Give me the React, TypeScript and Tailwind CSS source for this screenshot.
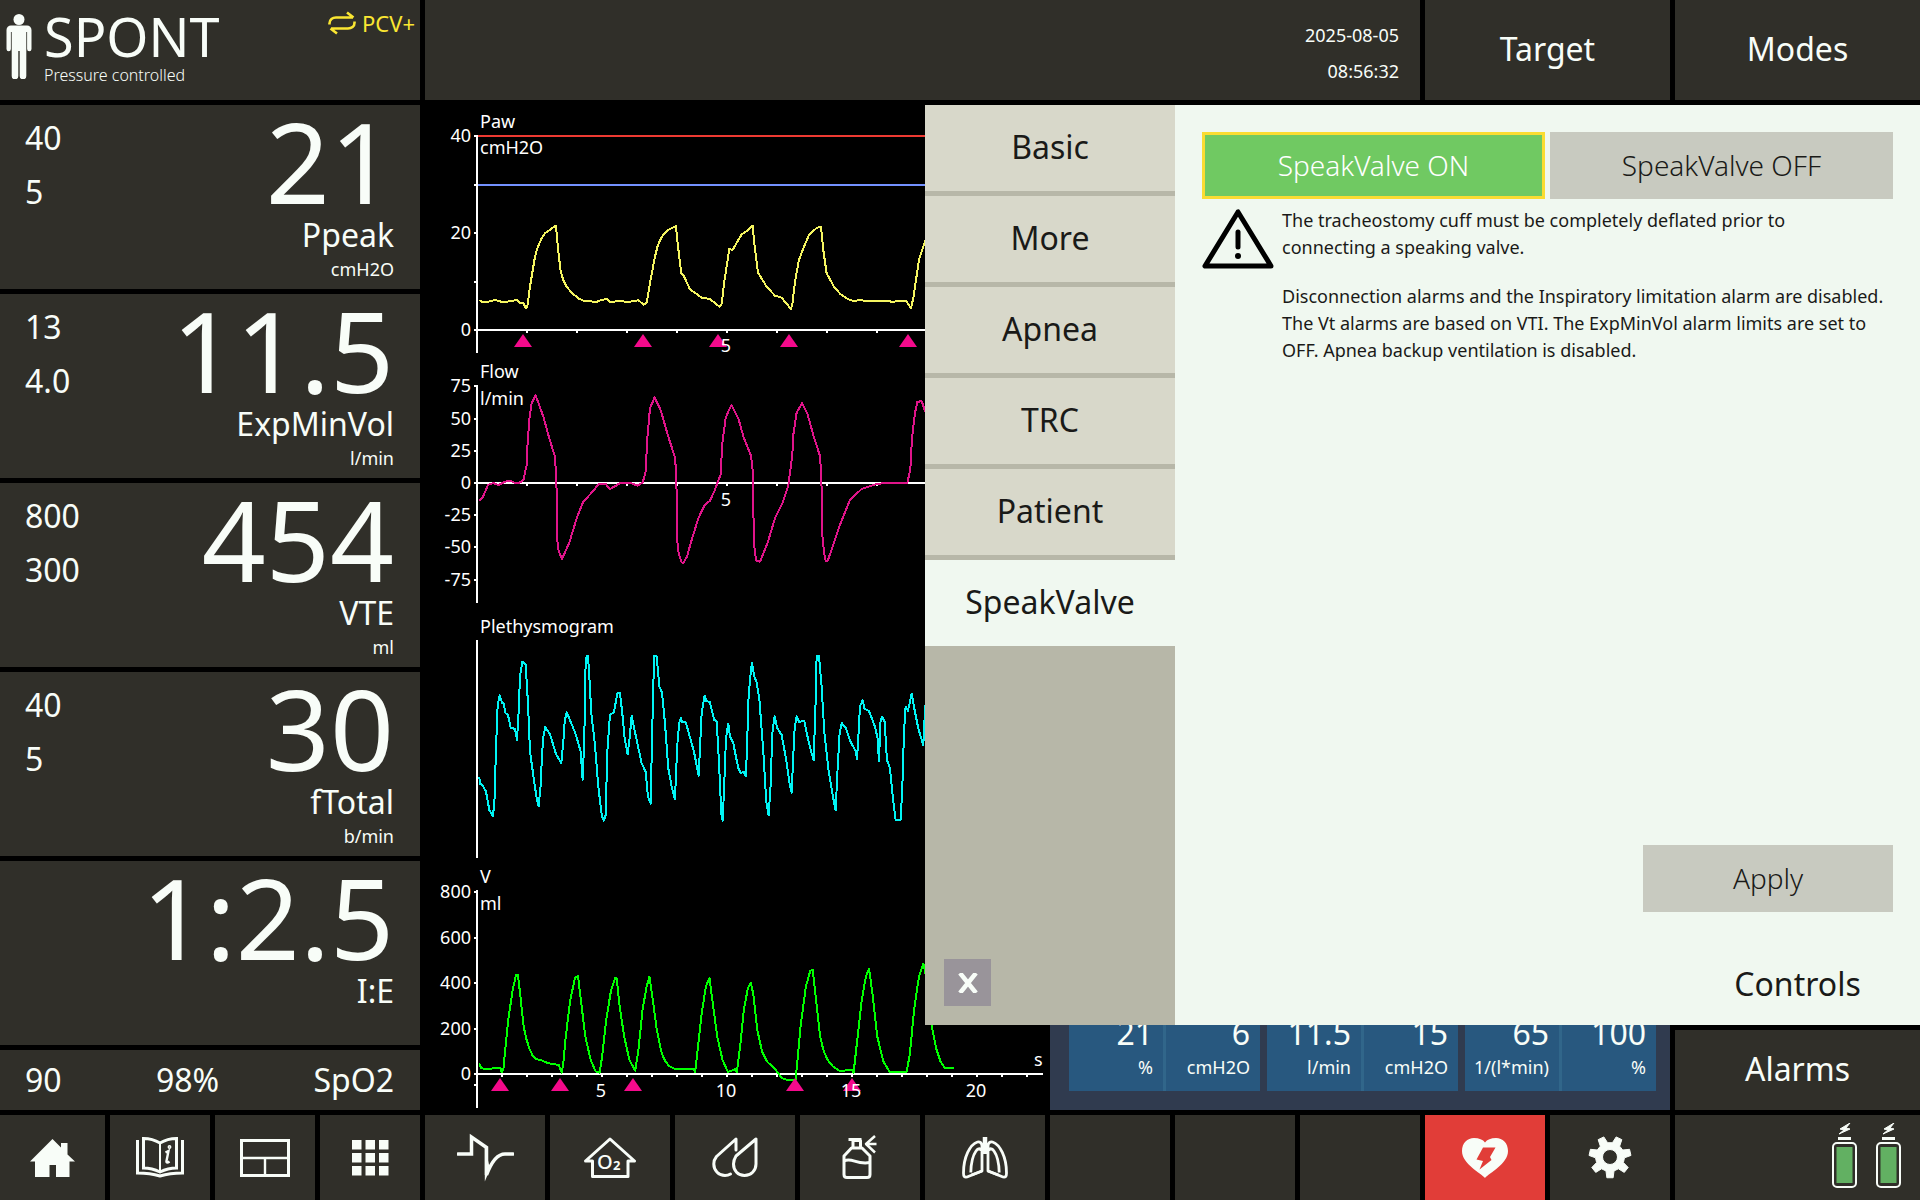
import React from "react";

const vitals = [
  { high: "40", low: "5", value: "21", label: "Ppeak", unit: "cmH2O" },
  { high: "13", low: "4.0", value: "11.5", label: "ExpMinVol", unit: "l/min" },
  { high: "800", low: "300", value: "454", label: "VTE", unit: "ml" },
  { high: "40", low: "5", value: "30", label: "fTotal", unit: "b/min" },
  { high: "", low: "", value: "1:2.5", label: "I:E", unit: "" },
];

const tabs = ["Basic", "More", "Apnea", "TRC", "Patient", "SpeakValve"];

const settings = [
  [
    { value: "21", unit: "%" },
    { value: "6", unit: "cmH2O" },
  ],
  [
    { value: "11.5", unit: "l/min" },
    { value: "15", unit: "cmH2O" },
  ],
  [
    { value: "65", unit: "1/(l*min)" },
    { value: "100", unit: "%" },
  ],
];

const PAW =
  "178,600 185,605 205,605 225,600 250,607 290,600 300,608 310,608 317,624 322,620 330,560 345,470 352,445 365,415 375,400 385,393 395,385 408,377 413,435 422,515 430,540 440,560 455,578 475,595 490,602 530,606 545,599 562,598 570,606 600,603 625,606 655,601 672,614 680,608 690,550 705,470 713,438 723,415 733,400 745,390 768,378 773,430 784,520 790,525 810,568 845,593 870,597 898,620 905,612 913,545 928,447 938,450 965,403 985,390 998,377 1003,430 1014,518 1040,560 1065,587 1085,593 1113,627 1117,615 1125,545 1137,480 1150,445 1167,405 1190,384 1203,380 1210,450 1220,520 1242,560 1262,583 1285,598 1305,604 1315,600 1350,604 1380,603 1420,605 1458,602 1473,625 1480,595 1497,480 1515,425 1530,390";

const FLOW =
  "178,438 188,428 204,390 220,384 235,390 255,380 272,378 285,384 298,383 310,376 320,330 323,260 329,185 335,145 347,121 370,185 388,250 404,302 409,360 412,555 416,588 426,612 448,563 470,490 490,440 520,408 535,388 556,386 570,402 590,391 600,384 635,385 652,392 668,383 677,350 682,250 690,160 704,127 722,165 745,245 765,307 769,360 772,560 776,594 785,622 790,624 801,605 812,565 835,490 853,452 870,437 885,405 892,384 902,360 907,265 917,190 924,172 935,150 955,190 972,250 993,302 998,345 1000,470 1004,590 1010,618 1020,620 1043,563 1065,490 1088,443 1105,392 1111,346 1117,300 1120,240 1130,173 1146,145 1162,175 1180,240 1199,300 1204,350 1207,540 1212,590 1217,618 1223,618 1240,570 1260,510 1290,435 1325,402 1370,387 1400,384 1462,383 1471,345 1476,250 1485,175 1492,141 1505,138 1516,170 1530,200";

const PLETH =
  "178,515 180,536 188,541 198,560 208,615 218,634 223,600 228,430 233,300 239,271 246,293 251,296 257,325 264,330 272,368 285,372 291,405 296,320 300,215 307,170 317,180 324,295 330,440 342,525 350,580 356,604 362,540 366,450 370,395 376,366 390,388 408,447 424,474 430,410 434,350 440,321 452,350 468,390 482,440 488,525 493,400 496,200 500,153 504,153 508,215 514,325 525,420 535,545 546,635 552,647 557,630 562,440 570,330 582,322 592,265 600,265 607,325 614,400 623,448 629,400 635,332 650,405 665,475 677,500 684,575 692,596 696,410 700,240 703,153 710,153 718,245 726,262 735,355 745,490 756,550 765,583 769,485 773,405 778,352 783,340 787,351 797,351 808,390 822,440 836,512 840,430 845,325 854,272 859,289 869,290 883,345 890,348 897,470 904,625 908,647 912,560 918,400 925,356 930,395 940,415 955,490 962,503 972,502 977,514 981,440 985,290 990,225 996,173 1003,215 1010,232 1018,280 1030,440 1039,590 1046,631 1052,540 1057,385 1064,333 1072,370 1085,390 1098,460 1108,530 1115,563 1120,450 1124,370 1130,333 1137,350 1153,349 1167,415 1181,466 1187,290 1190,153 1197,153 1205,245 1213,380 1225,490 1240,580 1247,616 1253,490 1259,385 1265,354 1278,370 1290,407 1308,440 1311,463 1315,400 1320,305 1328,285 1334,312 1347,318 1365,365 1373,400 1377,468 1382,345 1387,335 1394,350 1401,465 1410,490 1420,590 1427,645 1442,645 1447,550 1452,385 1457,305 1464,318 1475,266 1483,310 1495,370 1510,420 1516,300";

const VOLUME =
  "145,610 150,625 163,627 182,625 197,623 200,637 204,630 207,590 216,480 227,390 235,346 240,345 246,410 254,500 260,535 268,566 275,585 283,597 298,601 312,609 340,615 347,638 351,610 357,530 368,420 380,352 387,348 396,440 405,530 418,600 430,634 440,638 446,590 456,480 468,390 478,354 482,356 488,430 500,530 513,600 527,632 535,570 545,450 555,380 562,350 568,400 580,510 592,580 600,602 610,618 625,627 671,628 674,636 680,570 690,460 700,380 709,354 716,420 728,530 741,600 754,636 772,628 776,636 784,560 793,450 803,385 810,368 816,400 826,510 838,575 850,605 868,625 886,654 900,660 920,660 923,620 932,500 945,380 956,332 962,330 970,420 980,530 988,570 997,597 1010,618 1027,632 1058,631 1062,638 1070,550 1082,420 1092,350 1100,326 1108,400 1120,530 1135,605 1150,635 1192,636 1200,580 1210,450 1222,350 1233,311 1238,340 1252,490 1264,565 1275,605 1285,623 1307,624";

type Label = { at: number; text: string };

type ChartProps = {
  height: number;
  title: string;
  unit?: string;
  titleY: number;
  unitY?: number;
  axis: [number, number];
  baseline?: number;
  labels?: Label[];
  ticks?: number[];
  step?: number;
  seconds?: Label[];
  secondsY?: number;
  markers?: number[];
  markerY?: number;
  samples: string;
  color: string;
  scaleX?: number;
  children?: React.ReactNode;
};

const Chart = ({
  height,
  title,
  unit,
  titleY,
  unitY = 0,
  axis,
  baseline,
  labels = [],
  ticks = [],
  step = 50,
  seconds = [],
  secondsY = 0,
  markers = [],
  markerY = 0,
  samples,
  color,
  scaleX = 0.3333,
  children,
}: ChartProps) => {
  const xTicks: number[] = [];
  for (let x = 52 + step; x < 618; x += step) xTicks.push(x);

  return (
    <svg viewBox={`0 0 620 ${height}`} className="block w-full" role="img" aria-label={title}>
      {children}
      <g stroke="#ffffff" strokeWidth="2" shapeRendering="crispEdges">
        <path d={`M52 ${axis[0]}V${axis[1]}`} />
        {baseline && <path d={`M49 ${baseline}H618`} />}
        {[...labels.map((l) => l.at), ...ticks].map((y) => (
          <path key={y} d={`M49 ${y}H52`} />
        ))}
        {baseline && xTicks.map((x) => <path key={x} d={`M${x} ${baseline}v3`} />)}
      </g>
      <polyline
        points={samples}
        transform={`translate(-5 -5) scale(${scaleX} 0.3333)`}
        vectorEffect="non-scaling-stroke"
        shapeRendering="crispEdges"
        fill="none"
        stroke={color}
        strokeWidth="2"
        strokeLinejoin="round"
      />
      {markers.map((x) => (
        <path key={x} d={`M${x} ${markerY}l9 13h-18z`} fill="#f50a8c" />
      ))}
      <g fill="#ffffff" fontSize="18">
        <text x="55" y={titleY}>{title}</text>
        {unit && <text x="55" y={unitY}>{unit}</text>}
        {labels.map((l) => (
          <text key={l.text} x="46" y={l.at + 6} textAnchor="end">{l.text}</text>
        ))}
        {seconds.map((l) => (
          <text key={l.text} x={l.at} y={secondsY} textAnchor="middle">{l.text}</text>
        ))}
      </g>
    </svg>
  );
};

const Waveforms = () => (
  <section className="flex flex-col bg-black">
    <Chart
      height={255}
      title="Paw"
      unit="cmH2O"
      titleY={23}
      unitY={49}
      axis={[30, 248]}
      baseline={225}
      labels={[{ at: 31, text: "40" }, { at: 128, text: "20" }, { at: 225, text: "0" }]}
      ticks={[80, 177]}
      seconds={[{ at: 301, text: "5" }]}
      secondsY={247}
      markers={[98, 218, 293, 364, 483]}
      markerY={229}
      samples={PAW}
      color="#f5f560"
    >
      <path d="M52 31H620" stroke="#ee3a32" strokeWidth="2" />
      <path d="M52 80H620" stroke="#7391ff" strokeWidth="2" />
    </Chart>
    <Chart
      height={250}
      title="Flow"
      unit="l/min"
      titleY={18}
      unitY={45}
      axis={[25, 243]}
      baseline={123}
      labels={[
        { at: 26, text: "75" },
        { at: 59, text: "50" },
        { at: 91, text: "25" },
        { at: 123, text: "0" },
        { at: 155, text: "-25" },
        { at: 187, text: "-50" },
        { at: 220, text: "-75" },
      ]}
      seconds={[{ at: 301, text: "5" }]}
      secondsY={146}
      samples={FLOW}
      color="#e0148a"
    />
    <Chart height={255} title="Plethysmogram" titleY={23} axis={[30, 248]} samples={PLETH} color="#00f5f5" />
    <Chart
      height={245}
      title="V"
      unit="ml"
      titleY={18}
      unitY={45}
      axis={[25, 243]}
      baseline={209}
      labels={[
        { at: 27, text: "800" },
        { at: 73, text: "600" },
        { at: 118, text: "400" },
        { at: 164, text: "200" },
        { at: 209, text: "0" },
      ]}
      ticks={[220]}
      step={25}
      seconds={[
        { at: 176, text: "5" },
        { at: 301, text: "10" },
        { at: 426, text: "15" },
        { at: 551, text: "20" },
      ]}
      secondsY={232}
      markers={[75, 135, 208, 370, 427]}
      markerY={213}
      samples={VOLUME}
      color="#00ff00"
      scaleX={0.4083}
    >
      <text x="609" y="201" fontSize="18" fill="#ffffff">s</text>
    </Chart>
  </section>
);

const PersonIcon = () => (
  <svg width="26" height="65" viewBox="0 0 26 65" fill="currentColor" aria-hidden="true">
    <circle cx="13" cy="5.5" r="5.5" />
    <path d="M5 11.5h16a4.500 4.500 0 0 1 4.500 4.500v19a2.200 2.200 0 0 1-4.400 0V18h-.8v44a3 3 0 0 1-6.600 0V37h-1.400v25a3 3 0 0 1-6.600 0V18h-.8v17a2.200 2.200 0 0 1-4.400 0V16A4.500 4.500 0 0 1 5 11.500z" />
  </svg>
);

const SwapIcon = () => (
  <svg width="28" height="24" viewBox="0 0 28 24" fill="none" stroke="currentColor" strokeWidth="2.600" aria-hidden="true">
    <path d="M1.500 13.500C1 8 5 6.500 8 6.500h17M19 1.500l6.500 5M26.500 10.500C27 16 23 17.500 20 17.500H3M9 22.500l-6.500-5" />
  </svg>
);

const HomeIcon = () => (
  <svg width="46" height="38" viewBox="0 0 46 38" fill="currentColor" aria-hidden="true">
    <path d="M22.500 0l8.500 8.500V4h6.500v11.500l7.500 7h-5.500V38H26V26h-6.500v12H5V22.500H0z" />
  </svg>
);

const BookIcon = () => (
  <svg width="48" height="41" viewBox="0 0 48 41" fill="none" stroke="currentColor" strokeWidth="3" aria-hidden="true">
    <path d="M7.500 1.500C13 1.500 19 3 24 6c5-3 11-4.500 16.500-4.500V31C35 31 29 32.500 24 35 19 32.500 13 31 7.500 31z" />
    <path d="M24 6v29" strokeWidth="2" />
    <path d="M1.500 3v33c8 0 16 1 22.500 3 6.500-2 14.500-3 22.500-3V3" />
    <path d="M29.500 15.500l3-1.500-2 10c-.4 2 1 2 3 .5" strokeWidth="2.400" />
    <circle cx="33.500" cy="10" r="1.200" strokeWidth="1.500" />
  </svg>
);

const LayoutIcon = () => (
  <svg width="50" height="38" viewBox="0 0 50 38" fill="none" stroke="currentColor" strokeWidth="3" aria-hidden="true">
    <path d="M1.500 1.500h47v35h-47z" />
    <path d="M2 19h46M25 19v17" strokeWidth="2.400" />
  </svg>
);

const GridIcon = () => (
  <svg width="37" height="36" viewBox="0 0 37 36" fill="currentColor" aria-hidden="true">
    {[0, 13, 26].map((y) =>
      [0, 13.5, 27].map((x) => <rect key={`${x}-${y}`} x={x} y={y} width="9.500" height="9.500" />)
    )}
  </svg>
);

const ManeuverIcon = () => (
  <svg width="57" height="49" viewBox="0 0 57 49" fill="none" stroke="currentColor" strokeWidth="3.500" aria-hidden="true">
    <path d="M1 21h13.500V4L29.500 14.500V42C34 30 40 21 48 21h8" strokeLinecap="round" />
    <path d="M27.800 14v34.500L33 36z" fill="currentColor" stroke="none" />
  </svg>
);

const OxygenIcon = () => (
  <svg width="54" height="42" viewBox="0 0 54 42" aria-hidden="true">
    <path
      d="M9.500 24H2.500L27 2l24.500 22H45v15.500H9.500z"
      fill="none"
      stroke="currentColor"
      strokeWidth="3"
      strokeLinejoin="round"
    />
    <text x="14" y="32" fontSize="20" fontWeight="500" fill="currentColor">O</text>
    <text x="30" y="33" fontSize="13" fontWeight="700" fill="currentColor">2</text>
  </svg>
);

const DropsIcon = () => (
  <svg
    width="46"
    height="41"
    viewBox="0 0 46 41"
    fill="none"
    stroke="currentColor"
    strokeWidth="3"
    strokeLinecap="round"
    strokeLinejoin="round"
    aria-hidden="true"
  >
    <path d="M44 2v25c0 6.500-5 11.500-11.500 11.500S21.500 33.500 21.500 27c0-3 1-5.500 2.500-8z" />
    <path d="M24 13V2L4.500 19.500C2.500 22 1.800 24.500 1.800 27c0 6.500 5 11.500 11.200 11.500 2 0 4-.6 5.500-1.500" />
  </svg>
);

const NebulizerIcon = () => (
  <svg width="36" height="45" viewBox="0 0 36 45" fill="none" stroke="currentColor" strokeWidth="3" strokeLinejoin="round" aria-hidden="true">
    <path d="M9.500 13L2 21v18.500c0 2 1 3 3 3h20c2 0 3-1 3-3V21l-8-8z" />
    <path d="M11 13V5.500h7.500V13M6.500 4.500h13" />
    <path d="M2 26c8-4 12 4 26 1.500" />
    <path d="M33 1l-9 8 9 8.500M24 9h10.500" strokeWidth="2.500" />
  </svg>
);

const LungsIcon = () => (
  <svg width="46" height="42" viewBox="0 0 46 42" fill="none" stroke="currentColor" strokeWidth="2.800" strokeLinejoin="round" aria-hidden="true">
    <path d="M23 0v17" strokeWidth="4.500" />
    <path d="M20 34V9c0-3-2-4.500-4.500-4C8 7.500 1.500 20 1.500 36c0 3.500 1 4.500 3.500 4z" />
    <path d="M20 34L9.500 38M19 14c0-3-3-3-5 0-3.500 5-5 12-5.200 21.500" />
    <path d="M26 34V9c0-3 2-4.500 4.500-4C38 7.500 44.500 20 44.500 36c0 3.500-1 4.500-3.500 4z" />
    <path d="M26 34l10.500 4M27 14c0-3 3-3 5 0 3.500 5 5 12 5.200 21.500" />
  </svg>
);

const HeartIcon = () => (
  <svg width="46" height="40" viewBox="0 0 46 40" aria-hidden="true">
    <path
      d="M23 40C19 35 0 26 0 13 0 5 5.500 0 12 0c5 0 9 1.500 11 4.500C25 1.500 29 0 34 0c6.500 0 12 5 12 13 0 13-19 22-23 27z"
      fill="currentColor"
    />
    <path d="M21 9.500h12.500L28 19l1.500 3-12 9.500 3.500-8.500-6.500-1.500z" fill="#e13d38" />
  </svg>
);

const gearPath = Array.from({ length: 7 }, (_, i) => {
  const middle = Math.PI / 2 + (i * 2 * Math.PI) / 7;
  return [
    [-0.28, 14.5],
    [-0.15, 21],
    [0.15, 21],
    [0.28, 14.5],
  ]
    .map(([turn, r]) => `${22 + r * Math.cos(middle + turn)},${21 + r * Math.sin(middle + turn)}`)
    .join("L");
}).join("L");

const GearIcon = () => (
  <svg width="44" height="43" viewBox="0 0 44 43" aria-hidden="true">
    <path
      d={`M${gearPath}ZM14.500 21a7.500 7.500 0 1 0 15 0a7.500 7.500 0 1 0-15 0Z`}
      fill="currentColor"
      fillRule="evenodd"
      stroke="currentColor"
      strokeWidth="1"
      strokeLinejoin="round"
    />
  </svg>
);

const BatteryIcon = () => (
  <svg width="25" height="65" viewBox="0 0 25 65" aria-hidden="true">
    <path d="M18 0L8 6l4 1-5 4 11-5-4-1z" fill="#f8fdf8" stroke="#f8fdf8" strokeLinejoin="round" />
    <rect x="6" y="14" width="13" height="3" fill="#f8fdf8" />
    <rect x="1" y="20" width="23" height="44" rx="4" fill="none" stroke="#f8fdf8" strokeWidth="2" />
    <rect x="4.500" y="24" width="16" height="36" fill="#62b062" />
  </svg>
);

const WarningIcon = () => (
  <svg width="72" height="60" viewBox="0 0 72 60" fill="none" stroke="#000000" strokeWidth="5" strokeLinecap="round" strokeLinejoin="round" aria-hidden="true">
    <path d="M36 3L3 57h66z" />
    <path d="M36 23v15" />
    <circle cx="36" cy="47" r="3" fill="#000000" stroke="none" />
  </svg>
);

const Header = () => (
  <header className="grid h-[100px] grid-cols-[420fr_995fr_245fr_245fr] gap-[5px]">
    <div className="flex items-start bg-[#302f29] pl-[6px] pr-[5px]">
      <div className="pt-[14px]">
        <PersonIcon />
      </div>
      <div className="flex flex-col pl-3 pt-2">
        <h1 className="text-[54px] leading-[56px]">SPONT</h1>
        <p className="text-base leading-[22px] font-light">Pressure controlled</p>
      </div>
      <div className="ml-auto flex items-center gap-[6px] pt-2 text-[#fae632]">
        <SwapIcon />
        <span className="text-[22px] leading-[30px]">PCV+</span>
      </div>
    </div>
    <div className="flex flex-col items-end bg-[#302f29] pt-[17px] pr-[21px] text-lg leading-9">
      <time>2025-08-05</time>
      <time>08:56:32</time>
    </div>
    <button className="bg-[#302f29] pb-[2px] text-[32px]">Target</button>
    <button className="bg-[#302f29] pb-[2px] text-[32px]">Modes</button>
  </header>
);

const Vitals = () => (
  <section className="flex flex-col gap-[5px]">
    {vitals.map((v) => (
      <div key={v.label} className="flex flex-1 justify-between bg-[#302f29] pt-[6px] pr-[26px] pl-[25px]">
        <div className="text-[32px] leading-[54px]">
          <p>{v.high}</p>
          <p>{v.low}</p>
        </div>
        <div className="text-right">
          <p className="text-[112px] leading-[100px]">{v.value}</p>
          <p className="text-[32px] leading-[48px]">{v.label}</p>
          <p className="text-lg leading-5">{v.unit}</p>
        </div>
      </div>
    ))}
    <div className="flex h-[60px] items-center justify-between bg-[#302f29] pr-[26px] pl-[25px] text-[32px]">
      <span>90</span>
      <span>98%</span>
      <span>SpO2</span>
    </div>
  </section>
);

const Settings = () => (
  <section className="flex items-end gap-[7px] bg-[#303b4f] pt-[19px] pr-[14px] pb-[19px] pl-[19px]">
    {settings.map((pair, i) => (
      <div key={i} className="flex h-[160px] flex-1 divide-x-[3px] divide-[#31668a] bg-[#28587f]">
        {pair.map((s) => (
          <div key={s.value} className="flex flex-1 basis-0 flex-col justify-end pr-[10px] pb-[10px] text-right">
            <span className="text-[32px] leading-10">{s.value}</span>
            <span className="text-lg leading-7 whitespace-nowrap">{s.unit}</span>
          </div>
        ))}
      </div>
    ))}
  </section>
);

const ControlsDialog = () => (
  <div className="pointer-events-none absolute inset-x-0 top-0 bottom-[85px] grid grid-cols-[925fr_250fr_745fr] text-[#1a1a18]">
    <nav className="pointer-events-auto col-start-2 flex flex-col gap-[5px] bg-[#b7b7a8]">
      {tabs.map((tab) => (
        <button
          key={tab}
          className={`h-[86px] pb-[2px] text-[32px] ${tab === "SpeakValve" ? "bg-[#f0f8f0]" : "bg-[#d8d8ca]"}`}
        >
          {tab}
        </button>
      ))}
      <button
        aria-label="Close"
        className="mt-auto mb-[19px] ml-[19px] flex size-[47px] items-center justify-center bg-[#99949a] text-[#f8fdf8]"
      >
        <svg width="24" height="20" viewBox="0 0 24 20" stroke="currentColor" strokeWidth="4.500" aria-hidden="true">
          <path d="M4 0l16 20M20 0L4 20" />
        </svg>
      </button>
    </nav>
    <div className="pointer-events-auto flex flex-col bg-[#f0f8f0] pt-[27px]">
      <div className="mx-[27px] grid grid-cols-2 gap-[5px] text-[28px] font-light">
        <button aria-pressed="true" className="h-[67px] border-3 border-[#fadc32] bg-[#70c962] pb-[2px] text-white">
          SpeakValve ON
        </button>
        <button aria-pressed="false" className="h-[67px] bg-[#c8cac0] pb-[2px]">
          SpeakValve OFF
        </button>
      </div>
      <div className="mr-5 ml-[27px] flex gap-2 pt-2">
        <div className="shrink-0 pt-[2px]">
          <WarningIcon />
        </div>
        <div className="flex flex-col gap-[22px] text-lg leading-[27px]">
          <p>
            The tracheostomy cuff must be completely deflated prior to
            <br />
            connecting a speaking valve.
          </p>
          <p>
            Disconnection alarms and the Inspiratory limitation alarm are disabled. The Vt alarms are based on VTI. The
            ExpMinVol alarm limits are set to OFF. Apnea backup ventilation is disabled.
          </p>
        </div>
      </div>
      <button className="mt-auto mr-[27px] h-[67px] w-[250px] self-end bg-[#c8cac0] pb-[2px] text-[28px] font-light">
        Apply
      </button>
      <button className="mt-[33px] h-20 w-[245px] self-end pb-[2px] text-[32px]">Controls</button>
    </div>
  </div>
);

const tools = [
  { name: "Home", icon: <HomeIcon /> },
  { name: "Manual", icon: <BookIcon /> },
  { name: "Layout", icon: <LayoutIcon /> },
  { name: "Overview", icon: <GridIcon /> },
  { name: "Maneuver", icon: <ManeuverIcon /> },
  { name: "Oxygen", icon: <OxygenIcon /> },
  { name: "Humidifier", icon: <DropsIcon /> },
  { name: "Nebulizer", icon: <NebulizerIcon /> },
  { name: "Lungs", icon: <LungsIcon /> },
];

const Toolbar = () => (
  <footer className="grid h-[85px] grid-cols-[105fr_repeat(3,100fr)_repeat(10,120fr)_245fr] gap-[5px]">
    {tools.map((tool) => (
      <button key={tool.name} aria-label={tool.name} className="flex items-center justify-center bg-[#302f29]">
        {tool.icon}
      </button>
    ))}
    <div className="bg-[#302f29]" />
    <div className="bg-[#302f29]" />
    <div className="bg-[#302f29]" />
    <button aria-label="CPR" className="flex items-center justify-center bg-[#e13d38]">
      <HeartIcon />
    </button>
    <button aria-label="System" className="flex items-center justify-center bg-[#302f29]">
      <GearIcon />
    </button>
    <div className="flex items-center justify-end gap-[19px] bg-[#302f29] pr-[19px] pb-[5px]">
      <BatteryIcon />
      <BatteryIcon />
    </div>
  </footer>
);

const App = () => (
  <div className="flex min-h-screen flex-col gap-[5px] bg-black font-['Noto_Sans',sans-serif] text-[#f8fdf8]">
    <Header />
    <main className="relative grid flex-1 grid-cols-[420fr_620fr_620fr_245fr] gap-[5px]">
      <Vitals />
      <Waveforms />
      <Settings />
      <div className="flex flex-col justify-end">
        <button className="h-20 bg-[#302f29] pb-[2px] text-[32px]">Alarms</button>
      </div>
      <ControlsDialog />
    </main>
    <Toolbar />
  </div>
);

export default App;
